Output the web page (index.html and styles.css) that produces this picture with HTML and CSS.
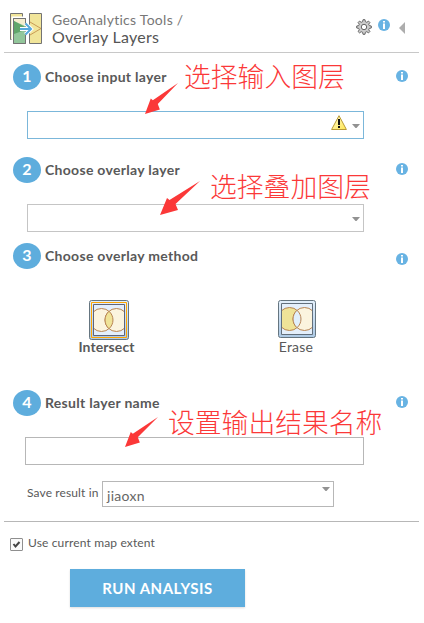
FILE: index.html
```
<!DOCTYPE html>
<html lang="en">
<head>
<meta charset="utf-8">
<title>Overlay Layers</title>
<link rel="stylesheet" href="styles.css">
</head>
<body>
<svg class="defs" width="0" height="0">
  <symbol id="info" viewBox="0 0 12 12"><circle cx="6" cy="6" r="6" fill="#68b3e3"/><path d="M5 2h2v1.600H5zM5 4.500h2V10H5z" fill="#fff"/></symbol>
  <symbol id="arrow" viewBox="0 0 40 34" preserveAspectRatio="none"><path d="M40 0L15.500 23L18 29L0 34L7 17L9.500 19Z" fill="#fb3838"/></symbol>
</svg>
<main class="panel">
  <header class="header">
    <svg class="logo" width="34" height="34" viewBox="0 0 34 34">
      <path d="M1.500 1.500h12v26h-12z" fill="#f1e59a" stroke="#737373"/>
      <path d="M3.500 5.500h12v26h-12z" fill="#fff" stroke="#fff" stroke-width="2"/>
      <path d="M4.500 6.500h12v25h-12z" fill="#f6edcf" stroke="#737373"/>
      <path d="M5 9l11 5v17H5z" fill="#92c69b"/><path d="M5 9l11 6v3L5 22z" fill="#60a56b"/>
      <path d="M4.500 6.500h12v25h-12z" fill="none" stroke="#737373"/>
      <path d="M20.500 1.500h12v30h-12z" fill="#f1e59a" stroke="#737373"/>
      <path d="M21 10l11 6.500L21 23" fill="none" stroke="#c99b55"/>
      <path d="M11 17h10M16.500 11.500l5.500 5.500-5.500 5.500" fill="none" stroke="#fff" stroke-width="4"/>
      <path d="M11 17h10M16.500 11.500l5.500 5.500-5.500 5.500" fill="none" stroke="#56a8dc" stroke-width="2"/>
    </svg>
    <div class="titles"><div class="crumb"><span class="tools">GeoAnalytics Tools</span> /</div><h1 class="title">Overlay Layers</h1></div>
    <svg class="gear" width="16" height="16" viewBox="0 0 16 16"><g fill="none" stroke="#666"><path d="M7 .7h2l.4 2 1.400.6 1.700-1.200 1.400 1.400-1.200 1.700.6 1.400 2 .4v2l-2 .4-.6 1.400 1.200 1.700-1.400 1.400-1.700-1.200-1.400.6-.4 2H7l-.4-2-1.400-.6-1.700 1.200-1.400-1.400 1.200-1.700-.6-1.400-2-.4V7l2-.4.6-1.400-1.200-1.700 1.400-1.400 1.700 1.200 1.400-.6z" fill="#ccc"/><circle cx="8" cy="8" r="2.700" fill="#fff"/></g></svg>
    <svg class="info head-info"><use href="#info"/></svg>
    <svg class="collapse" width="6" height="12" viewBox="0 0 6 12"><path d="M6 0v12L0 6z" fill="#adadad"/></svg>
  </header>

  <section class="step step-input">
    <div class="step-head"><span class="num">1</span><h2 class="label">Choose input layer</h2><svg class="info"><use href="#info"/></svg></div>
    <div class="select focused">
      <svg class="warn" width="16" height="15" viewBox="0 0 16 15"><defs><linearGradient id="wg" x2="1" y2="1"><stop stop-color="#fffbd0"/><stop offset="1" stop-color="#ffe650"/></linearGradient></defs><path d="M8 .7L15.400 14.500H.6z" fill="url(#wg)" stroke="#b99a35"/><path d="M7 4h2v6H7zM7 11h2v2H7z" fill="#111"/></svg>
      <svg class="caret" width="8" height="4" viewBox="0 0 8 4"><path d="M0 0h8L4.500 4h-1z" fill="#929292"/></svg>
    </div>
    <svg class="arrow a1"><use href="#arrow"/></svg><span class="note n1">选择输入图层</span>
  </section>

  <section class="step step-overlay">
    <div class="step-head"><span class="num">2</span><h2 class="label">Choose overlay layer</h2><svg class="info"><use href="#info"/></svg></div>
    <div class="select"><svg class="caret" width="8" height="4" viewBox="0 0 8 4"><path d="M0 0h8L4.500 4h-1z" fill="#929292"/></svg></div>
    <svg class="arrow a2"><use href="#arrow"/></svg><span class="note n2">选择叠加图层</span>
  </section>

  <section class="step step-method">
    <div class="step-head"><span class="num">3</span><h2 class="label">Choose overlay method</h2><svg class="info low"><use href="#info"/></svg></div>
    <div class="methods">
      <div class="method chosen">
        <svg width="40" height="40" viewBox="0 0 40 40"><defs><linearGradient id="bg" x2="0" y2="1"><stop stop-color="#e2effb"/><stop offset="1" stop-color="#acc9e5"/></linearGradient><clipPath id="cl"><path d="M5 5h30v30H5z"/></clipPath></defs><rect x=".5" y=".5" width="39" height="39" rx="2" fill="url(#bg)" stroke="#657580"/><path d="M2.500 2.500h35v35h-35z" fill="none" stroke="#ffa500"/><path d="M4.500 4.500h31v31h-31z" fill="#e4effb" stroke="#626477"/><g clip-path="url(#cl)" stroke="#b78352"><circle cx="12.500" cy="20" r="11.500" fill="#fbf4df"/><circle cx="27.500" cy="20" r="11.500" fill="#fbf4df"/><path d="M20 11.300a11.500 11.500 0 0 1 0 17.400a11.500 11.500 0 0 1 0-17.400z" fill="#efe398"/></g></svg>
        <span>Intersect</span>
      </div>
      <div class="method">
        <svg width="38" height="38" viewBox="0 0 38 38"><defs><clipPath id="cl2"><path d="M4 4h30v30H4z"/></clipPath></defs><rect x=".5" y=".5" width="37" height="37" rx="2" fill="url(#bg)" stroke="#657580"/><path d="M3.500 3.500h31v31h-31z" fill="#e4effb" stroke="#626f7c"/><g clip-path="url(#cl2)" stroke="#b78352"><circle cx="11.500" cy="19" r="11.500" fill="#efe398"/><circle cx="26.500" cy="19" r="11.500" fill="#fbf4df"/><path d="M19 10.300a11.500 11.500 0 0 1 0 17.400a11.500 11.500 0 0 1 0-17.400z" fill="#e1effc"/></g></svg>
        <span class="erase">Erase</span>
      </div>
    </div>
  </section>

  <section class="step step-result">
    <div class="step-head"><span class="num">4</span><h2 class="label">Result layer name</h2><svg class="info"><use href="#info"/></svg></div>
    <div class="textbox"></div>
    <div class="save"><span class="save-label">Save result in</span><div class="folder"><span>jiaoxn</span><svg class="caret" width="8" height="4" viewBox="0 0 8 4"><path d="M0 0h8L4.500 4h-1z" fill="#929292"/></svg></div></div>
    <svg class="arrow a4"><use href="#arrow"/></svg><span class="note n4">设置输出结果名称</span>
  </section>

  <footer class="footer">
    <label class="extent"><svg width="13" height="13" viewBox="0 0 13 13"><rect x=".5" y=".5" width="12" height="12" rx=".5" fill="#fafafa" stroke="#8f8f8f"/><path d="M3.500 6l2 2.500L9.500 4" fill="none" stroke="#444" stroke-width="2"/></svg><span>Use current map extent</span></label>
    <div class="run">RUN ANALYSIS</div>
  </footer>
</main>
</body>
</html>
```
FILE: styles.css
```
* { box-sizing: border-box; }
body { margin: 0; background: #fff; color: #4c4c4c; font-family: Lato, "Noto Sans CJK SC", sans-serif; font-size: 14px; }
svg { display: block; flex: none; }
.defs { position: absolute; }
h1, h2 { margin: 0; font-weight: 400; }
.panel { width: 415px; height: 623px; margin-left: 4px; }
.header { display: flex; align-items: flex-start; height: 53px; padding: 12px 14px 0 5px; border-bottom: 1px solid #c8c8c8; }
.titles { flex: 1; margin-left: 9px; white-space: nowrap; }
.crumb { font-size: 14px; line-height: 16px; color: #777; letter-spacing: .27px; }
.title { font-size: 16px; line-height: 18px; color: #555; letter-spacing: .25px; }
.gear { margin: 7px 6px 0 0; }
.info { width: 12px; height: 12px; margin-left: auto; }
.head-info { margin: 7px 9px 0 0; }
.collapse { margin-top: 10px; }
.step { position: relative; padding-left: 9px; }
.step-input { height: 93px; padding-top: 11px; }
.step-overlay { height: 93px; padding-top: 11px; }
.step-method { height: 140px; padding-top: 4px; }
.step-result { height: 142px; padding-top: 11px; }
.step-head { display: flex; align-items: center; height: 26px; padding-right: 11px; }
.num { width: 28px; height: 26px; border-radius: 50%; background: #5eaddd; color: #fff; font-size: 16px; font-weight: 700; line-height: 24px; text-align: center; }
.label { margin-left: 4px; font-size: 14px; line-height: 20px; font-weight: 700; white-space: nowrap; color: #595959; letter-spacing: .3px; }
.step-head .info { position: relative; top: -1px; }
.step-head .low { top: 3px; }
.select { display: flex; align-items: center; width: 337px; height: 28px; margin: 21px 0 0 14px; border: 1px solid #c5c5c5; padding-right: 3px; justify-content: flex-end; }
.focused { border-color: #7bb7da; }
.warn { margin: -5px 5px 0 0; }
.caret { margin-top: 2px; }
.methods { display: flex; margin-top: 31px; }
.method { display: flex; flex-direction: column; align-items: center; width: 188px; height: 60px; }
.method span { margin-top: -2px; line-height: 18px; color: #595959; }
.method .erase { margin: 0 0 0 -2px; letter-spacing: .2px; }
.chosen { margin-left: 2px; }
.chosen span { font-weight: 700; margin-left: -5px; letter-spacing: .1px; }
.textbox { width: 339px; height: 28px; margin: 21px 0 0 12px; border: 1px solid #b7b7b7; }
.save { display: flex; margin: 16px 0 0 14px; }
.save-label { width: 75px; font-size: 12px; line-height: 24px; white-space: nowrap; color: #595959; letter-spacing: .12px; }
.folder { display: flex; justify-content: space-between; width: 232px; height: 26px; padding: 3px 3px 0 4px; border: 1px solid #b7b7b7; font-size: 14px; line-height: 22px; color: #666; letter-spacing: .3px; }
.note { position: absolute; color: #fb3838; font-family: "Noto Sans CJK SC", sans-serif; font-weight: 300; font-size: 26.8px; line-height: 32px; white-space: nowrap; }
.n1 { left: 180px; top: 7px; }
.n2 { left: 206px; top: 24px; }
.n4 { left: 164px; top: 27px; }
.arrow { position: absolute; width: 40px; height: 34px; }
.a1 { left: 141px; top: 30px; width: 33px; height: 31px; }
.a2 { left: 156px; top: 35px; }
.a4 { left: 121px; top: 38px; width: 33px; height: 30px; }
.footer { border-top: 1px solid #b7b7b7; height: 102px; }
.extent { display: flex; align-items: center; height: 18px; margin: 13px 0 0 6px; font-size: 12px; color: #595959; }
.extent span { margin: -4px 0 0 5px; letter-spacing: .15px; }
.run { width: 175px; height: 38px; margin: 16px 0 0 66px; background: #5eaddd; color: #fff; font-size: 15px; font-weight: 700; line-height: 38px; text-align: center; box-shadow: 0 1px 2px #ddd; letter-spacing: .5px; }
```
